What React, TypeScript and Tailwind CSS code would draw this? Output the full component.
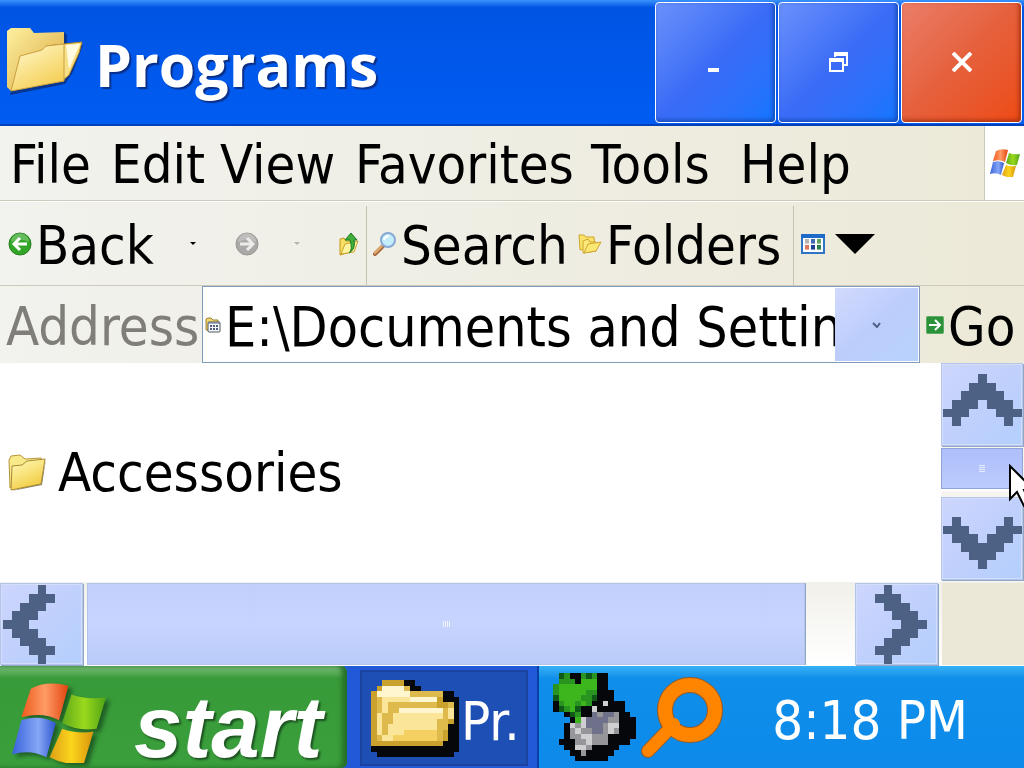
import React, { useState } from "react";

const UP = ["....#....", "...###...", "..#####..", ".###.###.", "###...###", ".#.....#."];
const DOWN = [...UP].reverse();
const LEFT = UP[0].split("").map((_, i) => UP.map((row) => row[i]).join(""));
const RIGHT = LEFT.map((row) => row.split("").reverse().join(""));

const FOLDER = [
  "..yyyykk........",
  ".ywwwwekk.......",
  "ywwwwwweeeeeekk.",
  "yecccccwwwwwykkk",
  "yeceeeeeeeeeyyek",
  "yeceewwwwwwwweck",
  "yceecccccccccecK",
  "yceecccccccceeyk",
  "yceccccccccceekk",
  "yceccclllllleykk",
  "yecclllllllleykk",
  "yyyyyyyyyyyyykkk",
  "kkkkkkkkkkkkkkkk",
  ".kkkkkkkkkkkkkk.",
];

const MODEM = [
  ".dmkkmdmkk.....",
  ".mmmkgggkk.....",
  "mgggggggkk.....",
  "mgggggmmkkk....",
  "dggggmmdkkk....",
  "kmggmgmkkhkkk..",
  "kdmgdkkhkkkkk..",
  "..kdmkksassakk.",
  "...kghssssaakkk",
  "..khahsssahhkkk",
  "..kahaassahakkk",
  "..kaahhaaakkkkk",
  ".kkkaahaaakkkk.",
  "..kkhhakkkkk...",
  "...kkakkkkk....",
  "....kkkkkk.....",
];

const COLORS: Record<string, string> = {
  "#": "#4d6185",
  k: "#05070a",
  K: "#05070a",
  y: "#c9a12c",
  e: "#deba4c",
  w: "#fff6d0",
  c: "#fae598",
  l: "#f4d062",
  g: "#3db51c",
  m: "#2a9420",
  d: "#0f5a18",
  h: "#cfcfd2",
  a: "#96969a",
  s: "#6e7189",
};

function Pixels({ rows, className }: { rows: string[]; className: string }) {
  return (
    <svg
      className={`shrink-0 ${className}`}
      viewBox={`0 0 ${rows[0].length} ${rows.length}`}
      preserveAspectRatio="none"
      shapeRendering="crispEdges"
      aria-hidden="true"
    >
      {rows.map((row, y) =>
        row.split("").map((c, x) => (c === "." ? null : <rect key={`${x}-${y}`} x={x} y={y} width="1" height="1" fill={COLORS[c]} />))
      )}
    </svg>
  );
}

function OpenFolder() {
  return (
    <svg className="w-[76px] h-[70px] shrink-0" viewBox="0 0 76 70" aria-hidden="true">
      <defs>
        <linearGradient id="of1" x1="0" y1="0" x2="1" y2="1">
          <stop offset="0" stopColor="#fdf0a0" />
          <stop offset="1" stopColor="#d9a63c" />
        </linearGradient>
        <linearGradient id="of2" x1="0" y1="0" x2="0.6" y2="1">
          <stop offset="0" stopColor="#fffbd0" />
          <stop offset="1" stopColor="#f5cf57" />
        </linearGradient>
      </defs>
      <path d="M3 68 L58 57 L66 45 L76 18 L66 20 L60 48 L4 64 Z" fill="#06266b" opacity="0.7" />
      <path d="M57 5 L60 8 V17 H57 Z" fill="#06266b" opacity="0.7" />
      <path d="M0 4 L4 1 H23 L27 6 L57 5 V54 L4 64 L0 60 Z" fill="url(#of1)" />
      <path d="M39 19 L75 15 L72 26 L62 48 L54 55 Z" fill="#f7df85" stroke="#b98a25" />
      <path d="M13 29 L35 23 L39 19 L57 17 V54 L4 64 Z" fill="url(#of2)" stroke="#c9a040" />
      <path d="M59 18 L73 17 L62 42 Z" fill="#fffbe0" />
    </svg>
  );
}

function SmallFolder() {
  return (
    <svg className="w-[38px] h-[38px] shrink-0" viewBox="0 0 38 38" aria-hidden="true">
      <defs>
        <linearGradient id="sf" x1="0" y1="0" x2="0.5" y2="1">
          <stop offset="0" stopColor="#fffbbd" />
          <stop offset="1" stopColor="#f2cd43" />
        </linearGradient>
      </defs>
      <path d="M4 37 L34 31 L38 5 L33 28 Z" fill="#8a8a78" />
      <path d="M2 34 L1 6 L3 2 L12 1 L17 5 L33 4 L34 8 Z" fill="#f8e98b" stroke="#b9963b" />
      <path d="M4 12 L14 11 L19 7 L37 5 L33 30 L3 36 Z" fill="url(#sf)" stroke="#a98932" />
    </svg>
  );
}

function RoundArrow({ forward }: { forward?: boolean }) {
  return (
    <svg className="w-6 h-6 shrink-0" viewBox="0 0 24 24" aria-hidden="true">
      <circle cx="12" cy="12" r="11" fill={forward ? "#aaa9a7" : "#32a626"} stroke={forward ? "#989795" : "#247e1d"} />
      <path d="M3 10 A9 9 0 0 1 21 10 Q12 5 3 10" fill="#fff" opacity="0.25" />
      <path
        d={forward ? "M5 12 H17 M12 6 L18 12 L12 18" : "M19 12 H7 M12 6 L6 12 L12 18"}
        fill="none"
        stroke={forward ? "#ecebe7" : "#fff"}
        strokeWidth="3"
      />
    </svg>
  );
}

function UpFolder() {
  return (
    <svg className="w-5 h-6 shrink-0" viewBox="0 0 20 24" aria-hidden="true">
      <path d="M1 23 V7 L5 6 L7 9 H15 V19 Z" fill="#f6df63" stroke="#c1961f" />
      <path d="M2 22 L6 12 L19 9 L15 20 Z" fill="#fff3a0" stroke="#c9a334" />
      <path d="M10 21 Q14 18 11 8 H6 L12 1 L18 8 H15 Q17 17 10 21 Z" fill="#3fae3a" stroke="#1d7a22" />
    </svg>
  );
}

function Magnifier() {
  return (
    <svg className="w-6 h-6 shrink-0" viewBox="0 0 24 24" aria-hidden="true">
      <path d="M2 22 L10 14" stroke="#a56a3f" strokeWidth="4" strokeLinecap="round" />
      <path d="M2 21 L9 14" stroke="#e5ad6b" strokeWidth="2" strokeLinecap="round" />
      <circle cx="15" cy="8" r="7" fill="#c3eef9" stroke="#87a8d6" strokeWidth="2" />
      <path d="M11 8 Q12 4 16 4" fill="none" stroke="#fff" strokeWidth="2" />
    </svg>
  );
}

function FoldersIcon() {
  return (
    <svg className="w-6 h-5 shrink-0" viewBox="0 0 24 20" aria-hidden="true">
      <path d="M2 16 L1 1 H6 L8 3 H16 L17 13 Z" fill="#f9e36a" stroke="#d0a52c" />
      <path d="M5 19 V7 L10 5 L12 8 H18 V17 Z" fill="#fbe97f" stroke="#d0a52c" />
      <path d="M6 19 L10 10 L23 8 L18 17 Z" fill="#fbe773" stroke="#d0a52c" />
    </svg>
  );
}

function ViewsIcon() {
  return (
    <svg className="w-6 h-5 shrink-0" viewBox="0 0 24 20" aria-hidden="true">
      <rect x="1" y="1" width="22" height="18" fill="#fafcff" stroke="#2f74c4" strokeWidth="2" />
      <rect width="24" height="4" fill="#1e6ac8" />
      {["#b8b4ae", "#4168b5", "#63a360", "#e1785b", "#1f3f95", "#2d8148"].map((c, i) => (
        <g key={c} fill={c}>
          <rect x={4 + (i % 3) * 6} y={i < 3 ? 5 : 11} width="4" height="4" />
          <rect x={4 + (i % 3) * 6} y={i < 3 ? 9 : 15} width="4" height="1" opacity="0.6" />
        </g>
      ))}
    </svg>
  );
}

function PathIcon() {
  return (
    <svg className="w-4 h-4 shrink-0" viewBox="0 0 16 16" aria-hidden="true">
      <path d="M1 13 V2 L3 1 H6 L8 3 H13 V13 Z" fill="#f3d668" stroke="#9b8240" />
      <rect x="3" y="5" width="12" height="10" rx="1" fill="#f5f7fa" stroke="#53565e" />
      <path d="M3 6 H15" stroke="#53688f" strokeWidth="1" />
      <path d="M5 9 H7 M8 9 H10 M11 9 H13 M5 12 H7 M8 12 H10 M11 12 H13" stroke="#4e5b80" strokeWidth="2" />
    </svg>
  );
}

function GoIcon() {
  return (
    <svg className="w-[18px] h-[18px] shrink-0" viewBox="0 0 18 18" aria-hidden="true">
      <rect x="0.5" y="0.5" width="17" height="17" rx="1" fill="#2c923a" stroke="#5fae68" />
      <path d="M3 9 H14 M9 4 L14 9 L9 14" fill="none" stroke="#fff" strokeWidth="2" />
    </svg>
  );
}

function Flag({ className, id }: { className: string; id: string }) {
  return (
    <svg className={`shrink-0 ${className}`} viewBox="0 0 30 28" preserveAspectRatio="none" aria-hidden="true">
      <defs>
        <linearGradient id={`${id}r`}>
          <stop offset="0" stopColor="#ee5a1c" />
          <stop offset="0.5" stopColor="#ff9b66" />
          <stop offset="1" stopColor="#e2440e" />
        </linearGradient>
        <linearGradient id={`${id}g`}>
          <stop offset="0" stopColor="#5fa81d" />
          <stop offset="0.5" stopColor="#9ad91c" />
          <stop offset="1" stopColor="#4fa315" />
        </linearGradient>
        <linearGradient id={`${id}b`}>
          <stop offset="0" stopColor="#3862dc" />
          <stop offset="0.6" stopColor="#86a7f5" />
          <stop offset="1" stopColor="#2f55cf" />
        </linearGradient>
        <linearGradient id={`${id}y`}>
          <stop offset="0" stopColor="#dca016" />
          <stop offset="0.5" stopColor="#fbd51d" />
          <stop offset="1" stopColor="#d8920c" />
        </linearGradient>
      </defs>
      <path d="M6 2 Q11 -1 18 1 L15 13 Q10 10 3 12 Z" fill={`url(#${id}r)`} />
      <path d="M19 4 Q24 6 30 5 L27 16 Q21 17 16 14 Z" fill={`url(#${id}g)`} />
      <path d="M3 13 Q9 11 14 14 L11 26 Q6 23 0 25 Z" fill={`url(#${id}b)`} />
      <path d="M16 16 Q21 18 26 17 L23 28 Q17 29 12 26 Z" fill={`url(#${id}y)`} />
    </svg>
  );
}

function TitleButton({ label, close, children }: { label: string; close?: boolean; children: React.ReactNode }) {
  const color = close
    ? "from-[#ea7d68] via-[#e5603b] to-[#ee4a10] shadow-[inset_-2px_-2px_4px_#a83413]"
    : "from-[#6a90fb] via-[#3a6bf6] to-[#0f76ff] shadow-[inset_-2px_-2px_4px_#174bb9]";
  return (
    <button
      aria-label={label}
      className={`w-[121px] h-[121px] flex items-center justify-center rounded border border-white bg-linear-to-br ${color}`}
    >
      {children}
    </button>
  );
}

function ScrollButton({ label, className, children }: { label: string; className: string; children: React.ReactNode }) {
  return (
    <button
      aria-label={label}
      className={`shrink-0 flex border border-[#b4c4e8] bg-linear-to-br from-[#cdd6fd] via-[#c0d0fc] to-[#b4cffd] shadow-[inset_0_0_0_1px_#d4defc,1px_1px_0_#8fa8c8] ${className}`}
    >
      {children}
    </button>
  );
}

const MENU = [
  { name: "File", width: "w-[101px]" },
  { name: "Edit", width: "w-[109px]" },
  { name: "View", width: "w-[135px]" },
  { name: "Favorites", width: "w-[236px]" },
  { name: "Tools", width: "w-[149px]" },
  { name: "Help", width: "w-[120px]" },
];

export default function App() {
  const [address, setAddress] = useState("E:\\Documents and Settings");

  return (
    <div className="h-screen flex flex-col overflow-hidden bg-white text-black text-[54px] leading-[64px] font-['DejaVu_Sans_Condensed','DejaVu_Sans',sans-serif] whitespace-nowrap">
      <header className="h-[126px] shrink-0 flex items-center pl-[7px] pr-[2px] bg-linear-to-b from-[#3a92ff] from-0% via-[#0054e3] via-6% to-[#005cf2] border-b-2 border-[#0040b8]">
        <OpenFolder />
        <h1 className="flex-1 pl-3 pt-1 text-[59px] font-bold text-white font-['Open_Sans',sans-serif] [text-shadow:2px_2px_1px_#0a2f87]">
          Programs
        </h1>
        <div className="flex gap-[2px]">
          <TitleButton label="Minimize">
            <span className="w-[11px] h-1 mt-4 -ml-1 bg-white" />
          </TitleButton>
          <TitleButton label="Restore">
            <svg className="w-5 h-5" viewBox="0 0 20 20" fill="none" stroke="#fff" aria-hidden="true">
              <path d="M6 5 V2 H18 V13 H15" strokeWidth="2" />
              <path d="M5 2 H19" strokeWidth="4" />
              <rect x="1" y="8" width="13" height="11" strokeWidth="2" />
              <path d="M0 8 H15" strokeWidth="4" />
            </svg>
          </TitleButton>
          <TitleButton label="Close" close>
            <svg className="w-5 h-5" viewBox="0 0 20 20" aria-hidden="true">
              <path d="M1 1 L19 19 M19 1 L1 19" stroke="#fff" strokeWidth="4" />
            </svg>
          </TitleButton>
        </div>
      </header>

      <nav className="h-[75px] shrink-0 flex bg-linear-to-r from-[#f2f2ee] to-[#ece9d8] border-b border-[#cdcabb]">
        <div className="flex-1 flex items-center pl-[10px] pt-1">
          {MENU.map((item) => (
            <button key={item.name} className={`${item.width} text-left`}>
              {item.name}
            </button>
          ))}
        </div>
        <div className="w-10 flex items-center justify-center bg-white border-l border-[#cdcabb]">
          <Flag id="brand" className="w-[30px] h-7" />
        </div>
      </nav>

      <div className="h-[85px] shrink-0 flex items-stretch bg-linear-to-r from-[#f2f2ee] to-[#ece9d8] border-t border-b border-t-white border-b-[#cdcabb]">
        <button className="w-[166px] pl-2 flex items-center gap-1">
          <RoundArrow />
          <span className="pt-1">Back</span>
        </button>
        <button aria-label="Back history" className="w-[54px] flex items-center pl-6">
          <svg className="w-[6px] h-[3px]" viewBox="0 0 6 3" aria-hidden="true">
            <path d="M0 0 H6 L3 3 Z" />
          </svg>
        </button>
        <button aria-label="Forward" className="w-[60px] flex items-center pl-[15px]">
          <RoundArrow forward />
        </button>
        <button aria-label="Forward history" className="w-[50px] flex items-center pl-[14px]">
          <svg className="w-[6px] h-[3px]" viewBox="0 0 6 3" fill="#b5b3aa" aria-hidden="true">
            <path d="M0 0 H6 L3 3 Z" />
          </svg>
        </button>
        <button aria-label="Up" className="w-9 flex items-center pl-[9px]">
          <UpFolder />
        </button>
        <div className="w-px mt-1 bg-[#c5c2b4]" />
        <button className="w-[207px] pl-[6px] flex items-center gap-1">
          <Magnifier />
          <span className="pt-1">Search</span>
        </button>
        <button className="w-[219px] pl-1 flex items-center gap-1">
          <FoldersIcon />
          <span className="pt-1">Folders</span>
        </button>
        <div className="w-px mt-1 bg-[#c5c2b4]" />
        <button aria-label="Views" className="pl-[7px] flex items-center gap-[10px]">
          <ViewsIcon />
          <svg className="w-10 h-5" viewBox="0 0 40 20" aria-hidden="true">
            <path d="M0 0 H40 L20 20 Z" />
          </svg>
        </button>
      </div>

      <div className="h-[77px] shrink-0 flex items-center bg-linear-to-r from-[#f2f2ee] to-[#ece9d8]">
        <label htmlFor="address" className="w-[202px] pl-[6px] pt-1 shrink-0 text-[#7f7e78]">
          Address
        </label>
        <div className="flex-1 min-w-0 h-full flex items-center border border-[#7f9db9] bg-white pl-[2px] p-px">
          <PathIcon />
          <input
            id="address"
            className="flex-1 min-w-0 pl-1 pt-1 text-[55px] outline-none"
            value={address}
            onChange={(e) => setAddress(e.target.value)}
          />
          <button
            aria-label="Show addresses"
            className="w-[83px] h-full shrink-0 flex items-center justify-center bg-linear-to-br from-[#d2dafd] via-[#bccdfc] to-[#b8d2fd]"
          >
            <svg className="w-[9px] h-[6px]" viewBox="0 0 9 6" aria-hidden="true">
              <path d="M1 1 L5 5 L8 1" fill="none" stroke="#4d6185" strokeWidth="2" />
            </svg>
          </button>
        </div>
        <button className="w-[104px] pl-[6px] shrink-0 flex items-center gap-1">
          <GoIcon />
          <span className="pt-1">Go</span>
        </button>
      </div>

      <main className="flex-1 min-h-0 flex">
        <div className="flex-1 flex items-center pl-2">
          <a href="#accessories" className="flex items-center gap-3">
            <SmallFolder />
            Accessories
          </a>
        </div>
        <div className="relative w-[83px] flex flex-col justify-between bg-[#f6f5ef] pb-[2px]">
          <ScrollButton label="Scroll up" className="w-[82px] h-[83px] justify-center pt-[10px]">
            <Pixels rows={UP} className="w-[79px] h-[52px]" />
          </ScrollButton>
          <div className="flex-1 pt-[2px]">
            <div className="w-[82px] h-[41px] flex flex-col items-center justify-center gap-px border border-[#8fa5d8] bg-linear-to-b from-[#aebffa] to-[#bccbfd] shadow-[0_2px_0_#fff]">
              {[0, 1, 2, 3].map((n) => (
                <span key={n} className="w-[6px] h-px bg-[#e6edff]" />
              ))}
            </div>
          </div>
          <ScrollButton label="Scroll down" className="w-[82px] h-[83px] justify-center pt-[19px]">
            <Pixels rows={DOWN} className="w-[79px] h-[52px]" />
          </ScrollButton>
          <svg className="absolute left-[67px] top-[101px] w-6 h-11" viewBox="0 0 24 44" aria-hidden="true">
            <path d="M2 2 V35 L9 28 L16 42 L22 40 L16 26 H26 Z" fill="#fff" stroke="#000" strokeWidth="2" />
          </svg>
        </div>
      </main>

      <div className="h-[84px] shrink-0 flex gap-1 bg-linear-to-b from-[#f1f0ea] to-white border-b border-white pt-px">
        <ScrollButton label="Scroll left" className="w-[83px] items-center pl-[2px]">
          <Pixels rows={LEFT} className="w-[52px] h-[79px]" />
        </ScrollButton>
        <div className="flex-1 flex items-center justify-center gap-px border border-[#b4c4e8] bg-linear-to-b from-[#c2cffb] via-[#c7d4fe] to-[#b9cbf9] shadow-[1px_0_0_#8fa8c8]">
          {[0, 1, 2, 3].map((n) => (
            <span key={n} className="w-px h-[6px] bg-[#eef3ff]" />
          ))}
        </div>
        <div className="w-[42px]" />
        <ScrollButton label="Scroll right" className="w-[83px] items-center pl-[19px]">
          <Pixels rows={RIGHT} className="w-[52px] h-[79px]" />
        </ScrollButton>
        <div className="w-[82px] bg-[#ebe8d7]" />
      </div>

      <footer className="h-[102px] shrink-0 flex bg-[#2259d8] text-white overflow-hidden">
        <button className="w-[347px] shrink-0 flex items-center pl-3 rounded-r-md bg-linear-to-b from-[#7cc07c] from-0% via-[#389a38] via-12% to-[#3a9f3c] shadow-[inset_-5px_0_5px_#256f27] text-[87px] leading-[76px] font-bold italic font-['Liberation_Sans',sans-serif] [text-shadow:2px_2px_2px_#1d5220]">
          <Flag id="start" className="w-[94px] h-[80px] mt-3 drop-shadow-[4px_3px_2px_#1f5d24]" />
          <span className="pl-7 pt-5">start</span>
        </button>
        <button className="w-[168px] ml-[13px] mt-1 mb-[2px] shrink-0 flex items-center gap-[2px] pl-[9px] bg-[#1d4fb5] border-2 border-[#1a44a0]">
          <Pixels rows={FOLDER} className="w-[88px] h-[77px]" />
          <span className="pt-2">Pr.</span>
        </button>
        <div className="flex-1 ml-[9px] flex items-center pl-[14px] pr-14 border-l-2 border-l-[#0a3fa5] bg-linear-to-b from-[#37b2f5] from-0% via-[#0f8eea] via-12% to-[#0d8aea]">
          <Pixels rows={MODEM} className="w-[83px] h-[88px]" />
          <svg className="ml-1 w-[84px] h-[84px]" viewBox="0 0 84 84" aria-hidden="true">
            <path d="M8 76 L32 51" stroke="#9a5a20" strokeWidth="14" strokeLinecap="round" />
            <circle cx="50" cy="35" r="25" fill="none" stroke="#9a5a20" strokeWidth="16" />
            <path d="M8 76 L34 49" stroke="#ff8400" strokeWidth="12" strokeLinecap="round" />
            <circle cx="50" cy="35" r="25" fill="none" stroke="#ff8400" strokeWidth="14" />
          </svg>
          <time className="ml-auto pt-2">8:18 PM</time>
        </div>
      </footer>
    </div>
  );
}
